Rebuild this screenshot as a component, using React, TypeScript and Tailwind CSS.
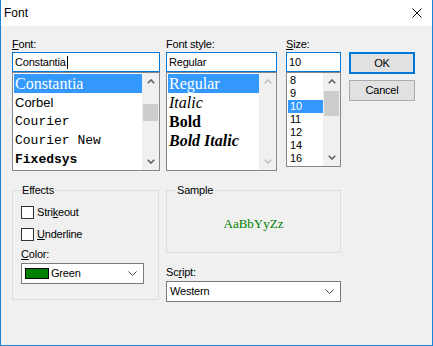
import type { ReactNode } from 'react';

const ui = "font-['Liberation_Sans',Arial,sans-serif] text-[11px] tracking-[-0.2px] text-black";

function ArrowUp({ color }: { color: string }) {
  return (
    <svg width="8" height="5" viewBox="0 0 8 5">
      <path d="M0.7 4.3 L4 1 L7.3 4.3" fill="none" stroke={color} strokeWidth="1.6" />
    </svg>
  );
}

function ArrowDown({ color }: { color: string }) {
  return (
    <svg width="8" height="5" viewBox="0 0 8 5">
      <path d="M0.7 0.7 L4 4 L7.3 0.7" fill="none" stroke={color} strokeWidth="1.6" />
    </svg>
  );
}

function ComboChevron() {
  return (
    <svg width="9" height="5" viewBox="0 0 9 5">
      <path d="M0.5 0.5 L4.5 4.5 L8.5 0.5" fill="none" stroke="#444" strokeWidth="1" />
    </svg>
  );
}

// thumbTop/thumbHeight in px inside the track; no thumb when disabled
function ScrollBar({ disabled, thumbTop, thumbHeight }: { disabled?: boolean; thumbTop?: number; thumbHeight?: number }) {
  const arrow = disabled ? '#c0c0c0' : '#606060';
  return (
    <div className="w-[17px] h-full bg-[#f0f0f0] flex flex-col">
      <div className="h-[17px] flex items-center justify-center">
        <ArrowUp color={arrow} />
      </div>
      <div className="flex-1 flex flex-col">
        {!disabled && thumbHeight ? (
          <div className="w-[15px] mx-auto bg-[#cdcdcd]" style={{ marginTop: thumbTop, height: thumbHeight }} />
        ) : null}
      </div>
      <div className="h-[17px] flex items-center justify-center">
        <ArrowDown color={arrow} />
      </div>
    </div>
  );
}

function Field({ children }: { children: ReactNode }) {
  return (
    <div className="h-[20px] border border-[#0078d7] bg-white flex items-center px-[2px]">
      {children}
    </div>
  );
}

function Label({ children }: { children: ReactNode }) {
  return <div className="h-[16px] leading-[16px]">{children}</div>;
}

function Combo({ children, width }: { children: ReactNode; width: string }) {
  return (
    <div className={`h-[21px] border border-[#7a7a7a] bg-white flex items-center justify-between pl-[3px] pr-[6px] ${width}`}>
      <div className="flex items-center">{children}</div>
      <ComboChevron />
    </div>
  );
}

function Check({ children }: { children: ReactNode }) {
  return (
    <div className="flex items-center h-[13px] mt-[9px] ml-[8px] leading-[13px]">
      <div className="w-[13px] h-[13px] border border-[#333] bg-white" />
      <span className="ml-[3px]">{children}</span>
    </div>
  );
}

const fonts = [
  { name: 'Constantia', cls: "font-['Liberation_Serif',serif] text-[16px] tracking-[0.2px]" },
  { name: 'Corbel', cls: "font-['Liberation_Sans',sans-serif] text-[13px]" },
  { name: 'Courier', cls: "font-['Liberation_Mono',monospace] text-[13px]" },
  { name: 'Courier New', cls: "font-['Liberation_Mono',monospace] text-[13px]" },
  { name: 'Fixedsys', cls: "font-['Liberation_Mono',monospace] text-[13px] font-bold" },
];

const styles = [
  { name: 'Regular', cls: '' },
  { name: 'Italic', cls: 'italic' },
  { name: 'Bold', cls: 'font-bold' },
  { name: 'Bold Italic', cls: 'font-bold italic' },
];

const sizes = ['8', '9', '10', '11', '12', '14', '16'];

export default function App() {
  return (
    <div className={`w-[433px] h-[346px] bg-[#f0f0f0] border-x border-b border-[#1883d7] flex flex-col ${ui}`}>
      {/* title bar */}
      <div className="h-[26px] bg-white flex items-center justify-between pl-[3px] pr-[10px] shrink-0">
        <span className="text-[12px] tracking-normal">Font</span>
        <svg width="10" height="10" viewBox="0 0 10 10">
          <path d="M0.5 0.5 L9.5 9.5 M9.5 0.5 L0.5 9.5" stroke="#000" strokeWidth="1" />
        </svg>
      </div>

      <div className="pl-[11px] pt-[10px]">
        {/* top row: font / style / size / buttons */}
        <div className="flex">
          <div className="w-[148px]">
            <Label><span className="underline">F</span>ont:</Label>
            <Field>
              <span>Constantia</span>
              <span className="w-[1px] h-[13px] bg-black ml-[1px]" />
            </Field>
            <div className="h-[99px] border border-[#828790] bg-white flex">
              <div className="flex-1 pt-[1px] pl-[1px]">
                {fonts.map((f, i) => (
                  <div
                    key={f.name}
                    className={`h-[19px] leading-[19px] pl-[1px] whitespace-nowrap tracking-normal ${f.cls} ${i === 0 ? 'bg-[#3399ff] text-white' : 'text-black'}`}
                  >
                    {f.name}
                  </div>
                ))}
              </div>
              <ScrollBar thumbTop={14} thumbHeight={17} />
            </div>
          </div>

          <div className="w-[111px] ml-[6px]">
            <Label>Font style:</Label>
            <Field>
              <span>Regular</span>
            </Field>
            <div className="h-[99px] border border-[#828790] bg-white flex">
              <div className="flex-1 pt-[1px] pl-[1px] font-['Liberation_Serif',serif] text-[16px] tracking-normal">
                {styles.map((s, i) => (
                  <div
                    key={s.name}
                    className={`h-[19px] leading-[19px] pl-[1px] whitespace-nowrap ${s.cls} ${i === 0 ? 'bg-[#3399ff] text-white' : 'text-black'}`}
                  >
                    {s.name}
                  </div>
                ))}
              </div>
              <ScrollBar disabled />
            </div>
          </div>

          <div className="w-[55px] ml-[9px]">
            <Label><span className="underline">S</span>ize:</Label>
            <Field>
              <span>10</span>
            </Field>
            <div className="h-[95px] border border-[#828790] bg-white flex">
              <div className="flex-1 pt-[1px] pl-[1px]">
                {sizes.map((s) => (
                  <div
                    key={s}
                    className={`h-[13px] leading-[13px] pl-[2px] ${s === '10' ? 'bg-[#3399ff] text-white' : 'text-black'}`}
                  >
                    {s}
                  </div>
                ))}
              </div>
              <ScrollBar thumbTop={1} thumbHeight={25} />
            </div>
          </div>

          <div className="w-[66px] ml-[8px] pt-[16px] flex flex-col">
            <div className="h-[22px] border-2 border-[#0078d7] bg-[#e1e1e1] flex items-center justify-center">OK</div>
            <div className="h-[21px] mt-[6px] border border-[#adadad] bg-[#e1e1e1] flex items-center justify-center">Cancel</div>
          </div>
        </div>

        {/* bottom row: effects / sample + script */}
        <div className="flex mt-[12px]">
          <fieldset className="w-[147px] h-[117px] border border-[#dcdcdc]">
            <legend className="ml-[8px] px-[1px] leading-[14px]">Effects</legend>
            <Check>Stri<span className="underline">k</span>eout</Check>
            <Check><span className="underline">U</span>nderline</Check>
            <div className="ml-[8px] mt-[6px] h-[14px] leading-[14px]"><span className="underline">C</span>olor:</div>
            <div className="ml-[8px] mt-[2px]">
              <Combo width="w-[123px]">
                <div className="w-[24px] h-[11px] border border-black bg-[#008000]" />
                <span className="ml-[2px]">Green</span>
              </Combo>
            </div>
          </fieldset>

          <div className="w-[175px] ml-[7px] flex flex-col">
            <fieldset className="h-[70px] border border-[#dcdcdc]">
              <legend className="ml-[9px] px-[1px] leading-[14px]">Sample</legend>
              <div className="h-[54px] flex items-center justify-center font-['Liberation_Serif',serif] text-[13px] tracking-normal text-[#008000]">
                AaBbYyZz
              </div>
            </fieldset>
            <div className="mt-[11px] h-[17px] leading-[16px]">Sc<span className="underline">r</span>ipt:</div>
            <Combo width="w-[175px]">
              <span>Western</span>
            </Combo>
          </div>
        </div>
      </div>
    </div>
  );
}
